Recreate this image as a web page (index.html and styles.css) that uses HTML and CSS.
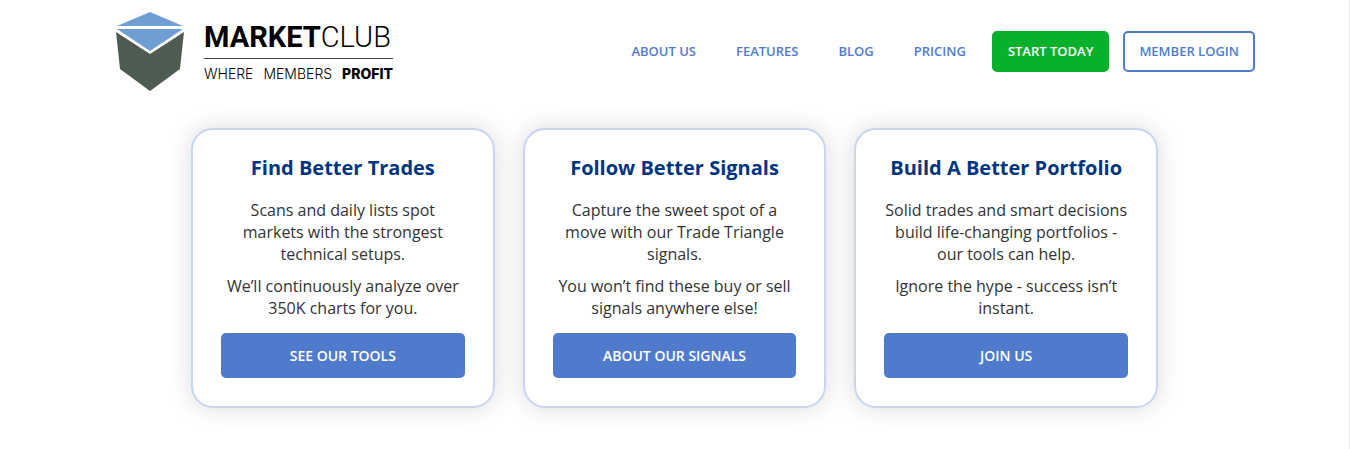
FILE: index.html
```html
<!DOCTYPE html>
<html lang="en">
<head>
  <meta charset="UTF-8">
  <title>MarketClub</title>
  <meta name="viewport" content="width=device-width, initial-scale=1.0">
  <link rel="stylesheet" href="styles.css">
</head>
<body>
  <header class="header">
    <a class="logo" href="#">
      <svg class="logo-mark" viewBox="0 0 68 79" aria-hidden="true">
        <path fill="#719dd5" d="M34 0 67 14H1z"/>
        <path fill="#719dd5" d="M1 17h66L34 39z"/>
        <path fill="#4d5b51" d="M0 20 34 42 68 20 64 57 34 79 4 57z"/>
      </svg>
      <span class="logo-text">
        <span class="logo-name"><b>MARKET</b><span>CLUB</span></span>
        <span class="logo-tagline"><span>WHERE</span><span>MEMBERS</span><b>PROFIT</b></span>
      </span>
    </a>
    <nav class="nav">
      <a href="#">ABOUT US</a>
      <a href="#">FEATURES</a>
      <a href="#">BLOG</a>
      <a href="#">PRICING</a>
    </nav>
    <div class="actions">
      <a class="btn btn-start" href="#">START TODAY</a>
      <a class="btn btn-login" href="#">MEMBER LOGIN</a>
    </div>
  </header>

  <main class="cards">
    <section class="card">
      <h2>Find Better Trades</h2>
      <p>Scans and daily lists spot markets with the strongest technical setups.</p>
      <p>We’ll continuously analyze over 350K charts for you.</p>
      <a class="card-btn" href="#">SEE OUR TOOLS</a>
    </section>
    <section class="card">
      <h2>Follow Better Signals</h2>
      <p>Capture the sweet spot of a move with our Trade Triangle signals.</p>
      <p>You won’t find these buy or sell signals anywhere else!</p>
      <a class="card-btn" href="#">ABOUT OUR SIGNALS</a>
    </section>
    <section class="card">
      <h2>Build A Better Portfolio</h2>
      <p>Solid trades and smart decisions build life-changing portfolios - our tools can help.</p>
      <p>Ignore the hype - success isn’t instant.</p>
      <a class="card-btn" href="#">JOIN US</a>
    </section>
  </main>
</body>
</html>
```
FILE: styles.css
```css
* {
  box-sizing: border-box;
}
body {
  margin: 0;
  min-height: 100vh;
  border-right: 1px solid #eee;
  background: #fff;
  color: #333;
  font-family: "Open Sans", sans-serif;
}
a {
  color: #507bcd;
  text-decoration: none;
}

/* header */
.header {
  display: flex;
  align-items: center;
  max-width: 1161px;
  margin: 0 auto;
  padding: 12px 0 0 22px;
}
.logo {
  display: flex;
  gap: 20px;
  color: #000;
  font-family: Roboto, sans-serif;
}
.logo-mark {
  width: 68px;
  height: 79px;
}
.logo-text {
  width: 189px;
  padding-top: 10px;
}
.logo-name {
  display: flex;
  padding-bottom: 6px;
  border-bottom: 1px solid #444;
  font-size: 29px;
  line-height: 30px;
}
.logo-name span {
  font-weight: 300;
}
.logo-tagline {
  display: flex;
  justify-content: space-between;
  padding-top: 7px;
  font-family: Inter, sans-serif;
  font-size: 14px;
  font-weight: 300;
  line-height: 16px;
}
.logo-tagline b {
  font-weight: 800;
}
.nav {
  display: flex;
  gap: 40px;
  margin-left: auto;
  font-size: 13px;
  font-weight: 600;
  line-height: 17px;
}
.actions {
  display: flex;
  gap: 14px;
  margin-left: 26px;
}
.btn {
  padding: 10px 14px;
  border: 2px solid #507bcd;
  border-radius: 5px;
  font-size: 13px;
  font-weight: 600;
  line-height: 17px;
}
.btn-start {
  border-color: #08b12b;
  background: #08b12b;
  color: #fff;
}

/* cards */
.cards {
  display: grid;
  grid-template-columns: repeat(3, 1fr);
  gap: 28px;
  max-width: 967px;
  margin: 37px auto 0;
}
.card {
  padding: 28px;
  border: 2px solid #c8d5f0;
  border-radius: 22px;
  background: #fff;
  box-shadow: 0 0 25px rgba(0, 0, 0, 0.15);
  text-align: center;
}
.card h2 {
  margin: 0 0 21px;
  color: #003580;
  font-size: 20px;
  line-height: 20px;
}
.card p {
  margin: 0 0 10px;
  font-size: 16px;
  line-height: 22px;
}
.card-btn {
  display: block;
  margin-top: 14px;
  padding: 12px;
  border-radius: 5px;
  background: #507bcd;
  color: #fff;
  font-size: 14px;
  font-weight: 600;
  line-height: 21px;
}
```
